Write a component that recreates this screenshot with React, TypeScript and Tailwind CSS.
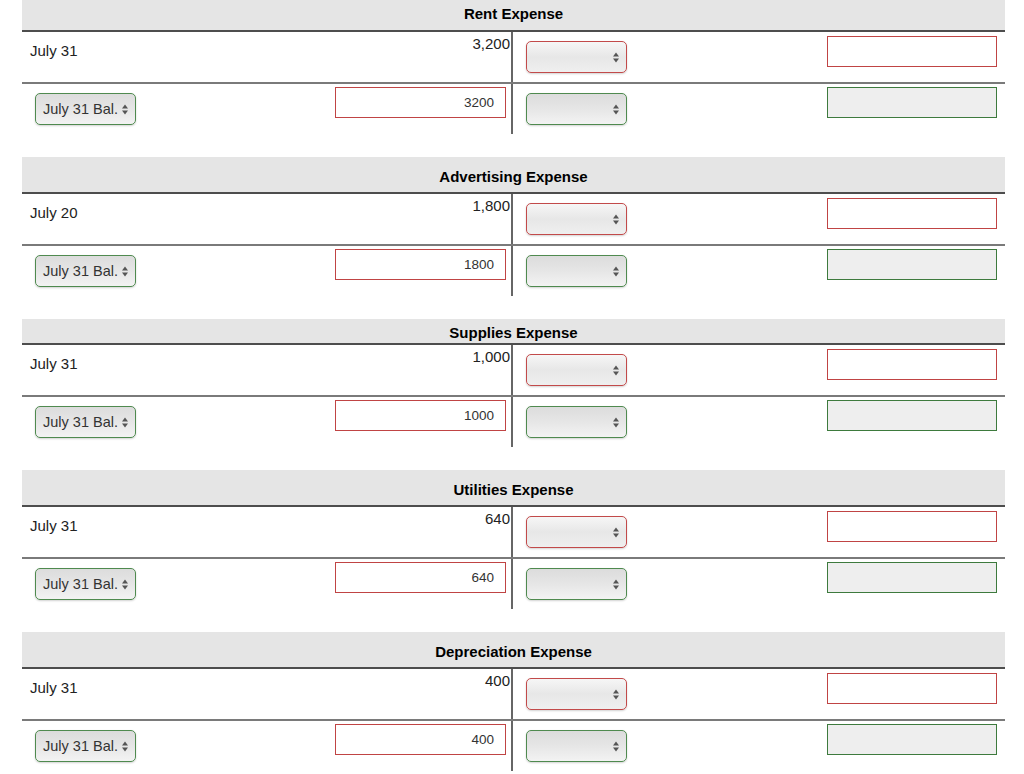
import React from "react";

type Acct = {
  title: string;
  date: string;
  amount: string;
  raw: string;
  header: string;
};

const accounts: Acct[] = [
  { title: "Rent Expense", date: "July 31", amount: "3,200", raw: "3200", header: "h-[32px] pt-[5px]" },
  { title: "Advertising Expense", date: "July 20", amount: "1,800", raw: "1800", header: "h-[37px] pt-[11px]" },
  { title: "Supplies Expense", date: "July 31", amount: "1,000", raw: "1000", header: "h-[26px] pt-[5px]" },
  { title: "Utilities Expense", date: "July 31", amount: "640", raw: "640", header: "h-[37px] pt-[11px]" },
  { title: "Depreciation Expense", date: "July 31", amount: "400", raw: "400", header: "h-[37px] pt-[11px]" },
];

function Arrows() {
  return (
    <svg width="6" height="11" viewBox="0 0 6 11" className="shrink-0">
      <polygon points="0,4.5 3,0.5 6,4.5" fill="#555" />
      <polygon points="0,6.5 3,10.5 6,6.5" fill="#555" />
    </svg>
  );
}

function Select({ tone, label }: { tone: "red" | "green"; label?: string }) {
  const cls =
    tone === "red"
      ? "border-[#c24a4a] bg-linear-to-b from-[#f6f6f6] via-[#e7e7e7] to-[#efefef]"
      : "border-[#4f8a4f] bg-linear-to-b from-[#dcdcdc] via-[#e6e6e6] to-[#f3f3f3]";
  return (
    <div
      className={`w-[101px] h-[32px] rounded-[5px] border ${cls} shadow-[0_1px_2px_rgba(0,0,0,0.18)] flex items-center justify-between pl-[7px] pr-[7px]`}
    >
      <span className="text-[14.5px] leading-none text-[#333] whitespace-nowrap">{label ?? ""}</span>
      <Arrows />
    </div>
  );
}

function Input({ tone, value, w }: { tone: "red" | "green"; value?: string; w: string }) {
  const cls = tone === "red" ? "border-[#c04444] bg-white" : "border-[#3d7a3d] bg-[#eeeeee]";
  return (
    <div className={`${w} h-[31px] border ${cls} flex items-center justify-end pr-[11px]`}>
      <span className="text-[13.5px] leading-none text-[#333]">{value ?? ""}</span>
    </div>
  );
}

function Block({ a }: { a: Acct }) {
  return (
    <div className="w-[983px]">
      <div
        className={`bg-[#e5e5e5] border-b-2 border-[#4d4d4d] text-center font-bold text-[15px] leading-[17px] text-black ${a.header}`}
      >
        {a.title}
      </div>
      <div className="grid grid-cols-[489px_2px_492px] h-[50px]">
        <div className="flex justify-between items-start">
          <span className="pt-[10px] pl-[8px] text-[15px] leading-[17px] text-[#222]">{a.date}</span>
          <span className="pt-[3px] pr-[1px] text-[15px] leading-[17px] text-[#222]">{a.amount}</span>
        </div>
        <div className="bg-[#666]" />
        <div className="flex justify-between items-start pl-[13px] pr-[8px]">
          <div className="mt-[9px]">
            <Select tone="red" />
          </div>
          <div className="mt-[4px]">
            <Input tone="red" w="w-[170px]" />
          </div>
        </div>
      </div>
      <div className="h-[2px] bg-[#7a7a7a]" />
      <div className="grid grid-cols-[489px_2px_492px] h-[50px]">
        <div className="flex justify-between items-start pl-[13px] pr-[5px]">
          <div className="mt-[9px]">
            <Select tone="green" label="July 31 Bal." />
          </div>
          <div className="mt-[3px]">
            <Input tone="red" value={a.raw} w="w-[171px]" />
          </div>
        </div>
        <div className="bg-[#666]" />
        <div className="flex justify-between items-start pl-[13px] pr-[8px]">
          <div className="mt-[9px]">
            <Select tone="green" />
          </div>
          <div className="mt-[3px]">
            <Input tone="green" w="w-[170px]" />
          </div>
        </div>
      </div>
    </div>
  );
}

export default function App() {
  return (
    <div className="w-[1024px] h-[774px] overflow-hidden bg-white pl-[22px] font-['Liberation_Sans',Arial,sans-serif]">
      <div className="flex flex-col gap-[23px]">
        {accounts.map((a) => (
          <Block key={a.title} a={a} />
        ))}
      </div>
    </div>
  );
}
